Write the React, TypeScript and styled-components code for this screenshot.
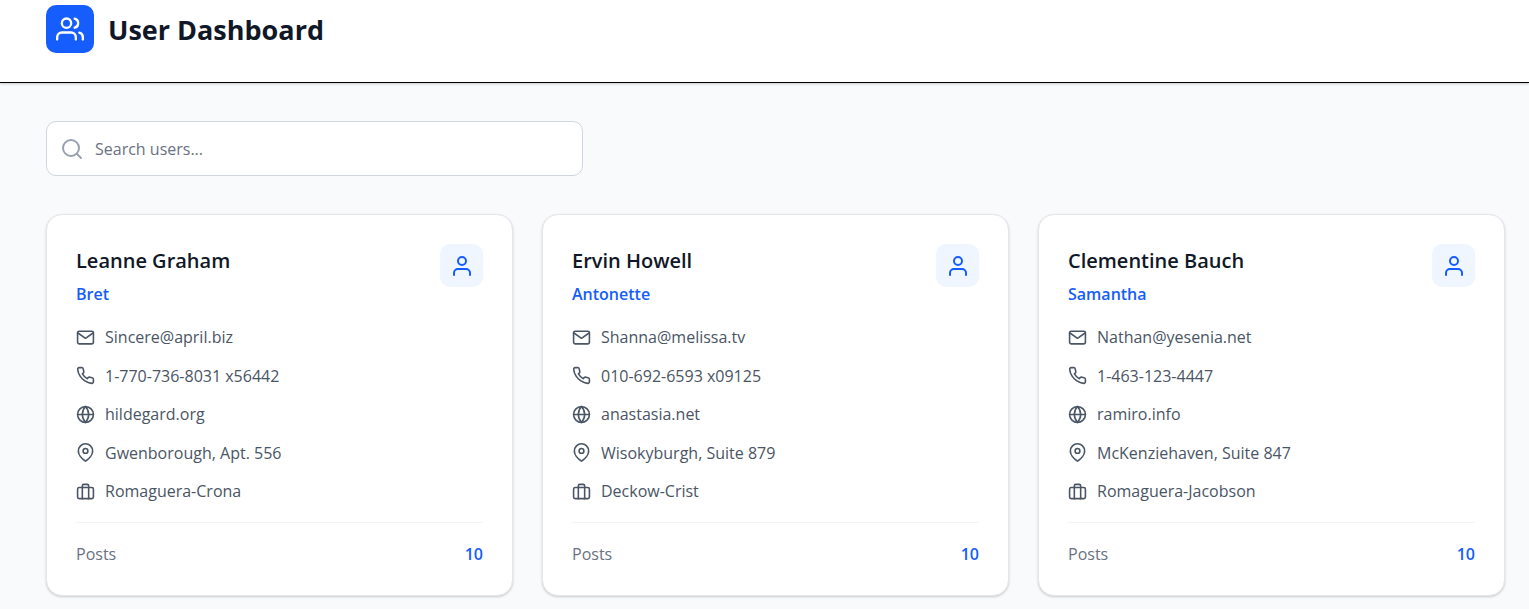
import React, { useState } from "react";
import styled, { createGlobalStyle } from "styled-components";
import {
  FiBriefcase,
  FiGlobe,
  FiMail,
  FiMapPin,
  FiPhone,
  FiSearch,
  FiUser,
  FiUsers,
} from "react-icons/fi";

const GlobalStyle = createGlobalStyle`
  *, *::before, *::after { box-sizing: border-box; }
  body {
    margin: 0;
    background: #f9fafb;
    color: #101828;
    font-family: "Segoe UI", "Open Sans", "Noto Sans", sans-serif;
    font-size: 16px;
    line-height: 24px;
  }
  h1, h2, p, ul, dl, dt, dd { margin: 0; padding: 0; }
`;

const Header = styled.header`
  display: flex;
  align-items: center;
  gap: 14px;
  padding: 5px 24px 29px 46px;
  background: #fff;
  border-bottom: 1px solid #000;
  box-shadow: 0 1px 3px rgba(0, 0, 0, 0.1), 0 1px 2px rgba(0, 0, 0, 0.1);
`;

const Logo = styled.span`
  display: flex;
  align-items: center;
  justify-content: center;
  width: 48px;
  height: 48px;
  border-radius: 10px;
  background: #155dfc;
  color: #fff;
`;

const PageTitle = styled.h1`
  padding-top: 2px;
  font-size: 27px;
  line-height: 38px;
  font-weight: 700;
`;

const Main = styled.main`
  padding: 38px 24px 38px 46px;
`;

const SearchField = styled.label`
  display: flex;
  align-items: center;
  gap: 11px;
  max-width: 537px;
  height: 55px;
  margin-bottom: 38px;
  padding: 0 13px;
  border: 1px solid #d1d5dc;
  border-radius: 10px;
  background: #fff;
  color: #99a1af;
`;

const SearchInput = styled.input`
  flex: 1;
  min-width: 0;
  padding: 0;
  border: 0;
  outline: 0;
  background: transparent;
  color: #101828;
  font: inherit;

  &::placeholder {
    color: #6a7282;
    opacity: 1;
  }
`;

const CardGrid = styled.div`
  display: grid;
  grid-template-columns: repeat(3, minmax(0, 1fr));
  gap: 29px;
`;

const Card = styled.article`
  padding: 29px;
  border: 1px solid #e5e7eb;
  border-radius: 16px;
  background: #fff;
  box-shadow: 0 1px 3px rgba(0, 0, 0, 0.1), 0 1px 2px rgba(0, 0, 0, 0.1);
`;

const CardHead = styled.div`
  display: flex;
  align-items: flex-start;
  justify-content: space-between;
  margin-bottom: 19px;
`;

const Name = styled.h2`
  margin-bottom: 4px;
  font-size: 20px;
  line-height: 34px;
  font-weight: 600;
`;

const Username = styled.p`
  color: #155dfc;
  font-weight: 600;
`;

const Avatar = styled.span`
  display: flex;
  align-items: center;
  justify-content: center;
  width: 43px;
  height: 43px;
  border-radius: 10px;
  background: #eff6ff;
  color: #155dfc;
`;

const Details = styled.ul`
  display: flex;
  flex-direction: column;
  justify-content: space-between;
  min-height: 178px;
  list-style: none;
  color: #4a5565;
`;

const Detail = styled.li`
  display: flex;
  align-items: center;
  gap: 10px;
`;

const Posts = styled.dl`
  display: flex;
  justify-content: space-between;
  margin-top: 19px;
  padding-top: 19px;
  border-top: 1px solid #f3f4f6;
`;

const PostsLabel = styled.dt`
  color: #6a7282;
`;

const PostsCount = styled.dd`
  color: #155dfc;
  font-weight: 600;
`;

interface User {
  name: string;
  username: string;
  email: string;
  phone: string;
  website: string;
  address: string;
  company: string;
  posts: number;
}

const users: User[] = [
  {
    name: "Leanne Graham",
    username: "Bret",
    email: "Sincere@april.biz",
    phone: "1-770-736-8031 x56442",
    website: "hildegard.org",
    address: "Gwenborough, Apt. 556",
    company: "Romaguera-Crona",
    posts: 10,
  },
  {
    name: "Ervin Howell",
    username: "Antonette",
    email: "Shanna@melissa.tv",
    phone: "010-692-6593 x09125",
    website: "anastasia.net",
    address: "Wisokyburgh, Suite 879",
    company: "Deckow-Crist",
    posts: 10,
  },
  {
    name: "Clementine Bauch",
    username: "Samantha",
    email: "Nathan@yesenia.net",
    phone: "1-463-123-4447",
    website: "ramiro.info",
    address: "McKenziehaven, Suite 847",
    company: "Romaguera-Jacobson",
    posts: 10,
  },
];

function UserCard({ user }: { user: User }) {
  return (
    <Card>
      <CardHead>
        <div>
          <Name>{user.name}</Name>
          <Username>{user.username}</Username>
        </div>
        <Avatar>
          <FiUser size={24} />
        </Avatar>
      </CardHead>
      <Details>
        <Detail>
          <FiMail size={19} />
          {user.email}
        </Detail>
        <Detail>
          <FiPhone size={19} />
          {user.phone}
        </Detail>
        <Detail>
          <FiGlobe size={19} />
          {user.website}
        </Detail>
        <Detail>
          <FiMapPin size={19} />
          {user.address}
        </Detail>
        <Detail>
          <FiBriefcase size={19} />
          {user.company}
        </Detail>
      </Details>
      <Posts>
        <PostsLabel>Posts</PostsLabel>
        <PostsCount>{user.posts}</PostsCount>
      </Posts>
    </Card>
  );
}

export default function App() {
  const [query, setQuery] = useState("");
  const shown = users.filter((user) =>
    user.name.toLowerCase().includes(query.toLowerCase())
  );

  return (
    <>
      <GlobalStyle />
      <Header>
        <Logo>
          <FiUsers size={28} />
        </Logo>
        <PageTitle>User Dashboard</PageTitle>
      </Header>
      <Main>
        <SearchField>
          <FiSearch size={24} />
          <SearchInput
            type="text"
            aria-label="Search users"
            placeholder="Search users..."
            value={query}
            onChange={(event) => setQuery(event.target.value)}
          />
        </SearchField>
        <CardGrid>
          {shown.map((user) => (
            <UserCard key={user.username} user={user} />
          ))}
        </CardGrid>
      </Main>
    </>
  );
}
